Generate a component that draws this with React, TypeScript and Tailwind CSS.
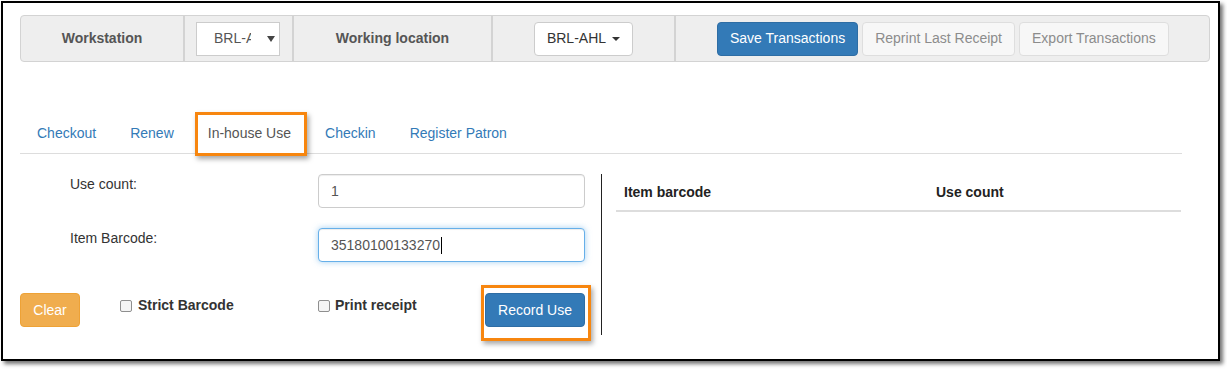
import React from "react";

const Caret = () => (
  <span className="inline-block ml-[6px] align-middle w-0 h-0 border-t-[4px] border-t-[#333] border-x-[4px] border-x-transparent" />
);

const tabs = ["Checkout", "Renew", "In-house Use", "Checkin", "Register Patron"];

const Highlight = ({ className }: { className: string }) => (
  <div
    className={`absolute border-[3px] border-[#f7860f] shadow-[2px_3px_5px_rgba(0,0,0,0.35)] pointer-events-none ${className}`}
  />
);

export default function App() {
  return (
    <div className="w-[1227px] h-[369px] bg-white overflow-hidden font-['Liberation_Sans',Arial,sans-serif] text-[14px] text-[#333]">
      <div className="ml-[1px] mt-[1px] w-[1219px] h-[360px] border-2 border-black bg-white shadow-[3px_3px_4px_rgba(0,0,0,0.55)] pl-[17px] pt-[12px]">
        {/* navbar */}
        <div className="w-[1190px] h-[47px] flex bg-[#eeeeee] border border-[#d3d3d3] rounded">
          <div className="w-[164px] border-r-2 border-[#d3d3d3] flex items-center justify-center font-bold text-[#555]">
            Workstation
          </div>
          <div className="w-[109px] border-r-2 border-[#d3d3d3] flex items-center pl-[11px]">
            <div className="w-[84px] h-[34px] bg-white border border-[#ccc] flex items-center pl-[17px] text-[#555]">
              <span className="w-[37px] overflow-hidden whitespace-nowrap">BRL-AHL</span>
              <svg width="8" height="6" viewBox="0 0 8 6" className="ml-[16px]">
                <path d="M0 0h8L4 6z" fill="#444" />
              </svg>
            </div>
          </div>
          <div className="w-[199px] border-r-2 border-[#d3d3d3] flex items-center justify-center font-bold text-[#555]">
            Working location
          </div>
          <div className="w-[183px] border-r-2 border-[#d3d3d3] flex items-center justify-center">
            <div className="h-[34px] px-3 bg-white border border-[#ccc] rounded flex items-center text-[#333]">
              BRL-AHL
              <Caret />
            </div>
          </div>
          <div className="flex items-center pl-[41px] gap-[4px]">
            <div className="h-[34px] px-3 flex items-center rounded bg-[#337ab7] border border-[#2e6da4] text-white">
              Save Transactions
            </div>
            <div className="h-[34px] px-3 flex items-center rounded bg-[#f7f7f7] border border-[#dedede] text-[#8c8c8c]">
              Reprint Last Receipt
            </div>
            <div className="h-[34px] px-3 flex items-center rounded bg-[#f7f7f7] border border-[#dedede] text-[#8c8c8c]">
              Export Transactions
            </div>
          </div>
        </div>

        {/* tabs */}
        <div className="mt-[51px] w-[1162px] flex border-b border-[#ddd] pl-px">
          {tabs.map((t) => (
            <div
              key={t}
              className={`relative px-4 py-[10px] leading-[20px] mr-[2px] ${
                t === "In-house Use" ? "text-[#555]" : "text-[#337ab7]"
              }`}
            >
              {t}
              {t === "In-house Use" && <Highlight className="left-[3px] right-0 -top-[1px] -bottom-[3px]" />}
            </div>
          ))}
        </div>

        {/* form + table */}
        <div className="mt-[20px] flex">
          <div className="w-[582px] h-[161px] border-r border-[#222] flex flex-col">
            <div className="flex">
              <div className="w-[298px] pl-[50px] leading-[20px]">Use count:</div>
              <div className="w-[267px] h-[34px] border border-[#ccc] rounded bg-white flex items-center px-3 text-[#555] shadow-[inset_0_1px_1px_rgba(0,0,0,0.075)]">
                1
              </div>
            </div>
            <div className="flex mt-[20px]">
              <div className="w-[298px] pl-[50px] leading-[20px]">Item Barcode:</div>
              <div className="w-[267px] h-[34px] border border-[#66afe9] rounded bg-white flex items-center px-3 text-[#555] shadow-[inset_0_1px_1px_rgba(0,0,0,0.075),0_0_6px_rgba(102,175,233,0.6)]">
                35180100133270
                <span className="w-px h-[17px] bg-black ml-px" />
              </div>
            </div>
            <div className="flex items-start mt-[31px]">
              <div className="w-[60px] h-[34px] rounded bg-[#f0ad4e] border border-[#eea236] text-white flex items-center justify-center">
                Clear
              </div>
              <div className="ml-[40px] mt-[2px] flex items-center w-[198px]">
                <span className="w-[12px] h-[12px] border border-[#8f8f8f] rounded-[2px] bg-[#f4f4f4]" />
                <span className="ml-[6px] font-bold">Strict Barcode</span>
              </div>
              <div className="mt-[2px] flex items-center w-[167px]">
                <span className="w-[12px] h-[12px] border border-[#8f8f8f] rounded-[2px] bg-[#f4f4f4]" />
                <span className="ml-[5px] font-bold">Print receipt</span>
              </div>
              <div className="relative">
                <div className="w-[100px] h-[34px] rounded bg-[#337ab7] border border-[#2e6da4] text-white flex items-center justify-center">
                  Record Use
                </div>
                <Highlight className="-left-[4px] -right-[6px] -top-[8px] -bottom-[14px]" />
              </div>
            </div>
          </div>
          <div className="ml-[14px] w-[565px]">
            <div className="flex border-b-2 border-[#ddd] font-bold text-[#222]">
              <div className="w-[312px] p-2 leading-[20px]">Item barcode</div>
              <div className="p-2 leading-[20px]">Use count</div>
            </div>
          </div>
        </div>
      </div>
    </div>
  );
}
